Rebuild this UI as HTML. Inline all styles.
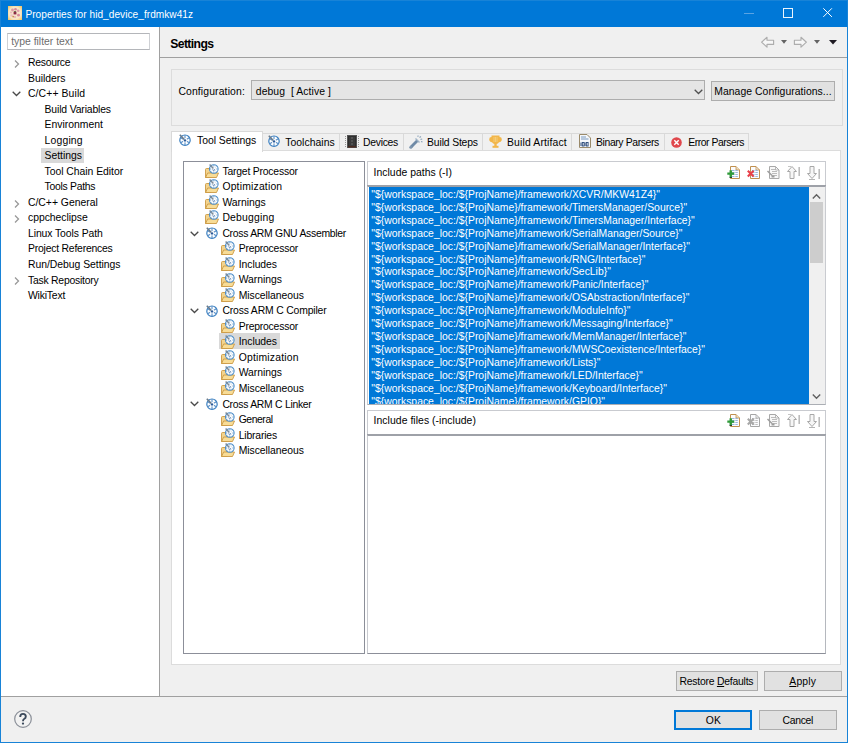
<!DOCTYPE html><html><head><meta charset="utf-8"><style>
html,body{margin:0;padding:0;}
body{width:848px;height:743px;position:relative;overflow:hidden;background:#f0f0f0;font-family:"Liberation Sans",sans-serif;}
.t{position:absolute;white-space:pre;line-height:20px;height:20px;}
.r{position:absolute;box-sizing:border-box;}
svg{position:absolute;overflow:visible;}
</style></head><body>
<div class="r" style="left:0px;top:0px;width:848px;height:743px;background:#f0f0f0;border:1px solid #1883d7;"></div>
<div class="r" style="left:1px;top:1px;width:846px;height:26px;background:#0078d7;"></div>
<svg style="left:8px;top:6px" width="14" height="14"><defs><radialGradient id="tg" cx="50%" cy="50%" r="70%"><stop offset="0" stop-color="#f6e2d0"/><stop offset="0.6" stop-color="#f7e6c6"/><stop offset="1" stop-color="#f2bf55"/></radialGradient></defs><rect x="0" y="0" width="14" height="14" fill="url(#tg)"/><circle cx="4.5" cy="4" r="1.4" fill="#dc98a4"/><circle cx="7.5" cy="3.2" r="1.3" fill="#d98a9a"/><circle cx="10.2" cy="4.8" r="1.3" fill="#e0a0ac"/><circle cx="10.5" cy="9.2" r="1.4" fill="#d68898"/><circle cx="7" cy="11" r="1.1" fill="#e4b0b8"/><circle cx="3.6" cy="9.5" r="1.3" fill="#ecc0c4"/><circle cx="3" cy="6.5" r="1" fill="#e8b8bc"/><circle cx="5.2" cy="10.6" r="0.9" fill="#c89050"/><rect x="5.6" y="5.6" width="2.8" height="2.8" fill="#8b2a45"/><rect x="6" y="5" width="2" height="0.8" fill="#5a6a40"/></svg><div class="t" style="left:25.40px;top:4.80px;font-size:10.1px;color:#fff;font-weight:normal;letter-spacing:0.047px;">Properties for hid_device_frdmkw41z</div>
<div class="r" style="left:744px;top:13px;width:10px;height:1px;background:#5aa3e3;"></div>
<div class="r" style="left:783px;top:8px;width:9.5px;height:9.5px;background:none;border:1px solid rgba(255,255,255,0.92);"></div>
<svg style="left:823px;top:8px" width="9" height="9"><path d="M0.3 0.3 L8.9 8.9 M8.9 0.3 L0.3 8.9" stroke="#fff" stroke-width="1"/></svg>
<div class="r" style="left:1px;top:27px;width:158px;height:669px;background:#fff;"></div>
<div class="r" style="left:159px;top:27px;width:1px;height:670px;background:#a0a0a0;"></div>
<div class="r" style="left:1px;top:696px;width:846px;height:1px;background:#a0a0a0;"></div>
<div class="r" style="left:7px;top:33px;width:143px;height:17px;background:#fff;border:1px solid #cfd1d5;border-top-color:#b4b6ba;border-bottom-color:#b4b6ba;"></div>
<div class="t" style="left:11.20px;top:31.70px;font-size:10.4px;color:#6d6d6d;font-weight:normal;letter-spacing:-0.007px;">type filter text</div>
<svg style="left:14px;top:59.8px" width="6" height="8"><path d="M1 0.5 L4.5 4 L1 7.5" fill="none" stroke="#999999" stroke-width="1.3"/></svg>
<div class="t" style="left:28.00px;top:52.70px;font-size:10.4px;color:#000;font-weight:normal;letter-spacing:-0.271px;">Resource</div>
<div class="t" style="left:28.00px;top:68.70px;font-size:10.4px;color:#000;font-weight:normal;letter-spacing:-0.029px;">Builders</div>
<svg style="left:12.2px;top:91.36px" width="9" height="6"><path d="M0.7 0.7 L4.5 4.5 L8.3 0.7" fill="none" stroke="#4a4a4a" stroke-width="1.3"/></svg>
<div class="t" style="left:28.00px;top:83.70px;font-size:10.4px;color:#000;font-weight:normal;letter-spacing:0.110px;">C/C++ Build</div>
<div class="t" style="left:44.60px;top:99.70px;font-size:10.4px;color:#000;font-weight:normal;letter-spacing:-0.150px;">Build Variables</div>
<div class="t" style="left:44.60px;top:114.70px;font-size:10.4px;color:#000;font-weight:normal;">Environment</div>
<div class="t" style="left:44.60px;top:130.70px;font-size:10.4px;color:#000;font-weight:normal;letter-spacing:0.167px;">Logging</div>
<div class="r" style="left:41px;top:147.7px;width:43px;height:15px;background:#d9d9d9;"></div>
<div class="t" style="left:44.60px;top:145.70px;font-size:10.4px;color:#000;font-weight:normal;letter-spacing:-0.029px;">Settings</div>
<div class="t" style="left:44.60px;top:161.70px;font-size:10.4px;color:#000;font-weight:normal;letter-spacing:-0.037px;">Tool Chain Editor</div>
<div class="t" style="left:44.60px;top:176.70px;font-size:10.4px;color:#000;font-weight:normal;letter-spacing:-0.280px;">Tools Paths</div>
<svg style="left:14px;top:199.57px" width="6" height="8"><path d="M1 0.5 L4.5 4 L1 7.5" fill="none" stroke="#999999" stroke-width="1.3"/></svg>
<div class="t" style="left:28.00px;top:192.70px;font-size:10.4px;color:#000;font-weight:normal;letter-spacing:-0.008px;">C/C++ General</div>
<svg style="left:14px;top:215.09999999999997px" width="6" height="8"><path d="M1 0.5 L4.5 4 L1 7.5" fill="none" stroke="#999999" stroke-width="1.3"/></svg>
<div class="t" style="left:28.00px;top:207.70px;font-size:10.4px;color:#000;font-weight:normal;letter-spacing:-0.036px;">cppcheclipse</div>
<div class="t" style="left:28.00px;top:223.70px;font-size:10.4px;color:#000;font-weight:normal;letter-spacing:-0.087px;">Linux Tools Path</div>
<div class="t" style="left:28.00px;top:238.70px;font-size:10.4px;color:#000;font-weight:normal;letter-spacing:-0.212px;">Project References</div>
<div class="t" style="left:28.00px;top:254.70px;font-size:10.4px;color:#000;font-weight:normal;letter-spacing:-0.029px;">Run/Debug Settings</div>
<svg style="left:14px;top:277.21999999999997px" width="6" height="8"><path d="M1 0.5 L4.5 4 L1 7.5" fill="none" stroke="#999999" stroke-width="1.3"/></svg>
<div class="t" style="left:28.00px;top:270.70px;font-size:10.4px;color:#000;font-weight:normal;letter-spacing:-0.236px;">Task Repository</div>
<div class="t" style="left:28.00px;top:285.70px;font-size:10.4px;color:#000;font-weight:normal;letter-spacing:-0.200px;">WikiText</div>
<div class="t" style="left:170.20px;top:34.07px;font-size:12.2px;color:#000;font-weight:bold;letter-spacing:-0.600px;">Settings</div>
<svg style="left:761px;top:37px" width="14" height="11"><path d="M0.6 5.2 L6 0.3 L6 3.2 L12.6 3.2 L12.6 7.4 L6 7.4 L6 10.2 Z" fill="#f7f7f7" stroke="#adadad" stroke-width="1.15" stroke-linejoin="round"/></svg>
<svg style="left:780.5px;top:40px" width="6" height="4"><path d="M0 0 L6 0 L3 3.8 Z" fill="#646464"/></svg>
<svg style="left:794px;top:37px" width="14" height="11"><path d="M12.4 5.2 L7 0.3 L7 3.2 L0.4 3.2 L0.4 7.4 L7 7.4 L7 10.2 Z" fill="#f7f7f7" stroke="#adadad" stroke-width="1.15" stroke-linejoin="round"/></svg>
<svg style="left:813.5px;top:40px" width="6" height="4"><path d="M0 0 L6 0 L3 3.8 Z" fill="#646464"/></svg>
<svg style="left:828.5px;top:40px" width="8" height="5"><path d="M0 0 L8 0 L4 4.5 Z" fill="#1e1a22"/></svg>
<div class="r" style="left:160px;top:57px;width:687px;height:1px;background:#a0a0a0;"></div>
<div class="r" style="left:171px;top:69px;width:672px;height:57px;background:none;border:1px solid #dcdcdc;"></div>
<div class="t" style="left:178.40px;top:81.70px;font-size:10.4px;color:#000;font-weight:normal;letter-spacing:0.131px;">Configuration:</div>
<div class="r" style="left:251px;top:80px;width:454px;height:20px;background:#e5e5e5;border:1px solid #adadad;"></div>
<div class="t" style="left:255.80px;top:81.70px;font-size:10.4px;color:#000;font-weight:normal;letter-spacing:0.069px;">debug  [ Active ]</div>
<svg style="left:694px;top:88.5px" width="9" height="6"><path d="M0.7 0.7 L4.5 4.5 L8.3 0.7" fill="none" stroke="#505050" stroke-width="1.3"/></svg>
<div class="r" style="left:711px;top:81px;width:124px;height:20px;background:#e1e1e1;border:1px solid #adadad;"></div>
<div class="t" style="left:714.20px;top:81.70px;font-size:10.4px;color:#000;font-weight:normal;letter-spacing:0.057px;">Manage Configurations...</div>
<div class="r" style="left:262px;top:133px;width:487px;height:18px;background:#f0f0f0;border:1px solid #d9d9d9;"></div>
<div class="r" style="left:339px;top:134px;width:1px;height:16px;background:#d9d9d9;"></div>
<div class="r" style="left:403px;top:134px;width:1px;height:16px;background:#d9d9d9;"></div>
<div class="r" style="left:482px;top:134px;width:1px;height:16px;background:#d9d9d9;"></div>
<div class="r" style="left:571px;top:134px;width:1px;height:16px;background:#d9d9d9;"></div>
<div class="r" style="left:664px;top:134px;width:1px;height:16px;background:#d9d9d9;"></div>
<div class="r" style="left:171px;top:150px;width:670px;height:515px;background:#fff;border:1px solid #dcdcdc;"></div>
<div class="r" style="left:171px;top:131px;width:92px;height:21px;background:#fff;border:1px solid #d9d9d9;border-bottom:none;"></div>
<svg style="left:179px;top:134px" width="12" height="12" viewBox="0 0 12 12"><circle cx="6" cy="6.2" r="5.2" fill="#fff" stroke="#3a7fc0" stroke-width="1.2"/><path d="M6 1.2 V11.2 M1.7 3.7 L10.3 8.7 M1.7 8.7 L10.3 3.7" stroke="#5a90c8" stroke-width="1.1"/><circle cx="6" cy="6.2" r="2.2" fill="#fff"/><circle cx="6" cy="6.4" r="1.2" fill="#2a5a9a"/><path d="M0.8 0.8 L5.3 5.5" stroke="#6a7a8a" stroke-width="1.6"/></svg>
<div class="t" style="left:197.00px;top:130.70px;font-size:10.4px;color:#000;font-weight:normal;letter-spacing:-0.033px;">Tool Settings</div>
<svg style="left:267.5px;top:135px" width="12" height="12" viewBox="0 0 12 12"><circle cx="6" cy="6.2" r="5.2" fill="#fff" stroke="#3a7fc0" stroke-width="1.2"/><path d="M6 1.2 V11.2 M1.7 3.7 L10.3 8.7 M1.7 8.7 L10.3 3.7" stroke="#5a90c8" stroke-width="1.1"/><circle cx="6" cy="6.2" r="2.2" fill="#fff"/><circle cx="6" cy="6.4" r="1.2" fill="#2a5a9a"/><path d="M0.8 0.8 L5.3 5.5" stroke="#6a7a8a" stroke-width="1.6"/></svg>
<div class="t" style="left:285.20px;top:132.70px;font-size:10.4px;color:#000;font-weight:normal;letter-spacing:0.044px;">Toolchains</div>
<svg style="left:345px;top:135px" width="14" height="13"><rect x="2.5" y="0.5" width="9" height="12" fill="#2e2e2e" stroke="#555" stroke-width="1"/><rect x="4" y="2" width="6" height="9" fill="#3a3a3a"/><path d="M6 3 H8 M6 6 H8 M6 9 H8" stroke="#777" stroke-width="0.8"/><path d="M0.5 1 V12" stroke="#9a9a9a" stroke-width="1" stroke-dasharray="1 1"/><path d="M13.5 1 V12" stroke="#9a9a9a" stroke-width="1" stroke-dasharray="1 1"/><rect x="3" y="11" width="8" height="1.5" fill="#4a2a20"/></svg>
<div class="t" style="left:363.10px;top:132.70px;font-size:10.4px;color:#000;font-weight:normal;letter-spacing:-0.300px;">Devices</div>
<svg style="left:409px;top:135px" width="14" height="13"><path d="M0.8 11.2 L7.5 4.5 L9.5 6.5 L2.8 13.2 Z" fill="#6f8aa6"/><circle cx="1.8" cy="12.2" r="1.5" fill="#7d95ad"/><path d="M6.5 3.5 L10.5 7.5" stroke="#9fb3c6" stroke-width="1.5"/><path d="M8.5 1.5 L9.5 0.8 M10.5 2.5 L12 1.5 M11.5 4.5 L13.2 4 M12 6.5 L13.5 7" stroke="#8aa2b8" stroke-width="1.1"/></svg>
<div class="t" style="left:427.10px;top:132.70px;font-size:10.4px;color:#000;font-weight:normal;letter-spacing:-0.160px;">Build Steps</div>
<svg style="left:489px;top:135px" width="13" height="13"><path d="M2.5 0.5 H10.5 V2 Q12.8 2 12.8 4.2 Q12.8 6.8 10 7.2 Q9 9 7.5 9 H5.5 Q4 9 3 7.2 Q0.2 6.8 0.2 4.2 Q0.2 2 2.5 2 Z" fill="#f2b64a"/><path d="M5 2 V7 M6.5 2 V7 M8 2 V7" stroke="#f7d58e" stroke-width="0.7"/><rect x="5.3" y="9" width="2.4" height="2" fill="#f2b64a"/><rect x="3.5" y="10.8" width="6" height="2" fill="#f2b64a"/></svg><div class="t" style="left:507.00px;top:132.70px;font-size:10.4px;color:#000;font-weight:normal;letter-spacing:0.154px;">Build Artifact</div>
<svg style="left:579px;top:134px" width="12" height="14"><path d="M0.5 0.5 H8 L11.5 4 V13.5 H0.5 Z" fill="#f4f7fb" stroke="#9a8a6a" stroke-width="1"/><path d="M2 3 H7 M2 5 H9.5" stroke="#7a9ac0" stroke-width="1"/><path d="M2 8.5 V12 M6 8.5 V12" stroke="#2a4a7a" stroke-width="1"/><rect x="3.3" y="8.5" width="1.8" height="3.5" fill="none" stroke="#2a4a7a" stroke-width="0.9"/><rect x="7.3" y="8.5" width="1.8" height="3.5" fill="none" stroke="#2a4a7a" stroke-width="0.9"/></svg><div class="t" style="left:596.00px;top:132.70px;font-size:10.4px;color:#000;font-weight:normal;letter-spacing:-0.377px;">Binary Parsers</div>
<svg style="left:671px;top:137px" width="11" height="11"><circle cx="5.5" cy="5.5" r="5.3" fill="#e0474c"/><path d="M3.3 3.3 L7.7 7.7 M7.7 3.3 L3.3 7.7" stroke="#fff" stroke-width="1.4"/></svg>
<div class="t" style="left:688.20px;top:132.70px;font-size:10.4px;color:#000;font-weight:normal;letter-spacing:-0.458px;">Error Parsers</div>
<div class="r" style="left:183px;top:161px;width:182px;height:493px;background:#fff;border:1px solid #8c8f99;"></div>
<svg style="left:205px;top:163.8px" width="14" height="14" viewBox="0 0 14 14"><path d="M0.5 13.5 V5.5 Q0.5 4.5 1.5 4.5 H4 L5 5.5 H6 V13.5 Z" fill="#f3d48e" stroke="#cc9a44" stroke-width="0.9"/><path d="M0.6 13.5 L2.6 9 H13.5 L11.5 13.5 Z" fill="#f8dc96" stroke="#cc9a44" stroke-width="0.9"/><circle cx="8.8" cy="5" r="4.3" fill="#fff" stroke="#4a8cc8" stroke-width="1.1"/><path d="M8.8 1.2 V2.5 M8.8 7.5 V8.8 M5 5 H6.3 M11.3 5 H12.6 M6.3 2.5 L7.1 3.3 M10.5 6.7 L11.3 7.5 M11.3 2.5 L10.5 3.3 M7.1 6.7 L6.3 7.5" stroke="#6a9ccc" stroke-width="0.9"/><path d="M7.5 5.3 L8.8 6.5 L10.1 5.3" fill="none" stroke="#2f5f9a" stroke-width="0.9"/><path d="M4.6 0.5 L8.4 4.6" stroke="#7d8b99" stroke-width="1.5"/></svg>
<div class="t" style="left:222.40px;top:161.70px;font-size:10.4px;color:#000;font-weight:normal;letter-spacing:-0.200px;">Target Processor</div>
<svg style="left:205px;top:179.33px" width="14" height="14" viewBox="0 0 14 14"><path d="M0.5 13.5 V5.5 Q0.5 4.5 1.5 4.5 H4 L5 5.5 H6 V13.5 Z" fill="#f3d48e" stroke="#cc9a44" stroke-width="0.9"/><path d="M0.6 13.5 L2.6 9 H13.5 L11.5 13.5 Z" fill="#f8dc96" stroke="#cc9a44" stroke-width="0.9"/><circle cx="8.8" cy="5" r="4.3" fill="#fff" stroke="#4a8cc8" stroke-width="1.1"/><path d="M8.8 1.2 V2.5 M8.8 7.5 V8.8 M5 5 H6.3 M11.3 5 H12.6 M6.3 2.5 L7.1 3.3 M10.5 6.7 L11.3 7.5 M11.3 2.5 L10.5 3.3 M7.1 6.7 L6.3 7.5" stroke="#6a9ccc" stroke-width="0.9"/><path d="M7.5 5.3 L8.8 6.5 L10.1 5.3" fill="none" stroke="#2f5f9a" stroke-width="0.9"/><path d="M4.6 0.5 L8.4 4.6" stroke="#7d8b99" stroke-width="1.5"/></svg>
<div class="t" style="left:222.40px;top:176.70px;font-size:10.4px;color:#000;font-weight:normal;letter-spacing:0.182px;">Optimization</div>
<svg style="left:205px;top:194.86px" width="14" height="14" viewBox="0 0 14 14"><path d="M0.5 13.5 V5.5 Q0.5 4.5 1.5 4.5 H4 L5 5.5 H6 V13.5 Z" fill="#f3d48e" stroke="#cc9a44" stroke-width="0.9"/><path d="M0.6 13.5 L2.6 9 H13.5 L11.5 13.5 Z" fill="#f8dc96" stroke="#cc9a44" stroke-width="0.9"/><circle cx="8.8" cy="5" r="4.3" fill="#fff" stroke="#4a8cc8" stroke-width="1.1"/><path d="M8.8 1.2 V2.5 M8.8 7.5 V8.8 M5 5 H6.3 M11.3 5 H12.6 M6.3 2.5 L7.1 3.3 M10.5 6.7 L11.3 7.5 M11.3 2.5 L10.5 3.3 M7.1 6.7 L6.3 7.5" stroke="#6a9ccc" stroke-width="0.9"/><path d="M7.5 5.3 L8.8 6.5 L10.1 5.3" fill="none" stroke="#2f5f9a" stroke-width="0.9"/><path d="M4.6 0.5 L8.4 4.6" stroke="#7d8b99" stroke-width="1.5"/></svg>
<div class="t" style="left:222.40px;top:192.70px;font-size:10.4px;color:#000;font-weight:normal;letter-spacing:-0.043px;">Warnings</div>
<svg style="left:205px;top:210.39000000000001px" width="14" height="14" viewBox="0 0 14 14"><path d="M0.5 13.5 V5.5 Q0.5 4.5 1.5 4.5 H4 L5 5.5 H6 V13.5 Z" fill="#f3d48e" stroke="#cc9a44" stroke-width="0.9"/><path d="M0.6 13.5 L2.6 9 H13.5 L11.5 13.5 Z" fill="#f8dc96" stroke="#cc9a44" stroke-width="0.9"/><circle cx="8.8" cy="5" r="4.3" fill="#fff" stroke="#4a8cc8" stroke-width="1.1"/><path d="M8.8 1.2 V2.5 M8.8 7.5 V8.8 M5 5 H6.3 M11.3 5 H12.6 M6.3 2.5 L7.1 3.3 M10.5 6.7 L11.3 7.5 M11.3 2.5 L10.5 3.3 M7.1 6.7 L6.3 7.5" stroke="#6a9ccc" stroke-width="0.9"/><path d="M7.5 5.3 L8.8 6.5 L10.1 5.3" fill="none" stroke="#2f5f9a" stroke-width="0.9"/><path d="M4.6 0.5 L8.4 4.6" stroke="#7d8b99" stroke-width="1.5"/></svg>
<div class="t" style="left:222.40px;top:207.70px;font-size:10.4px;color:#000;font-weight:normal;letter-spacing:0.213px;">Debugging</div>
<svg style="left:190px;top:230.62px" width="9" height="6"><path d="M0.7 0.7 L4.5 4.5 L8.3 0.7" fill="none" stroke="#4a4a4a" stroke-width="1.3"/></svg>
<svg style="left:205.5px;top:226.92000000000002px" width="12" height="12" viewBox="0 0 12 12"><circle cx="6" cy="6.2" r="5.2" fill="#fff" stroke="#3a7fc0" stroke-width="1.2"/><path d="M6 1.2 V11.2 M1.7 3.7 L10.3 8.7 M1.7 8.7 L10.3 3.7" stroke="#5a90c8" stroke-width="1.1"/><circle cx="6" cy="6.2" r="2.2" fill="#fff"/><circle cx="6" cy="6.4" r="1.2" fill="#2a5a9a"/><path d="M0.8 0.8 L5.3 5.5" stroke="#6a7a8a" stroke-width="1.6"/></svg>
<div class="t" style="left:222.40px;top:223.70px;font-size:10.4px;color:#000;font-weight:normal;letter-spacing:-0.273px;">Cross ARM GNU Assembler</div>
<svg style="left:221px;top:241.45px" width="14" height="14" viewBox="0 0 14 14"><path d="M0.5 13.5 V5.5 Q0.5 4.5 1.5 4.5 H4 L5 5.5 H6 V13.5 Z" fill="#f3d48e" stroke="#cc9a44" stroke-width="0.9"/><path d="M0.6 13.5 L2.6 9 H13.5 L11.5 13.5 Z" fill="#f8dc96" stroke="#cc9a44" stroke-width="0.9"/><circle cx="8.8" cy="5" r="4.3" fill="#fff" stroke="#4a8cc8" stroke-width="1.1"/><path d="M8.8 1.2 V2.5 M8.8 7.5 V8.8 M5 5 H6.3 M11.3 5 H12.6 M6.3 2.5 L7.1 3.3 M10.5 6.7 L11.3 7.5 M11.3 2.5 L10.5 3.3 M7.1 6.7 L6.3 7.5" stroke="#6a9ccc" stroke-width="0.9"/><path d="M7.5 5.3 L8.8 6.5 L10.1 5.3" fill="none" stroke="#2f5f9a" stroke-width="0.9"/><path d="M4.6 0.5 L8.4 4.6" stroke="#7d8b99" stroke-width="1.5"/></svg>
<div class="t" style="left:238.70px;top:238.70px;font-size:10.4px;color:#000;font-weight:normal;letter-spacing:-0.209px;">Preprocessor</div>
<svg style="left:221px;top:256.98px" width="14" height="14" viewBox="0 0 14 14"><path d="M0.5 13.5 V5.5 Q0.5 4.5 1.5 4.5 H4 L5 5.5 H6 V13.5 Z" fill="#f3d48e" stroke="#cc9a44" stroke-width="0.9"/><path d="M0.6 13.5 L2.6 9 H13.5 L11.5 13.5 Z" fill="#f8dc96" stroke="#cc9a44" stroke-width="0.9"/><circle cx="8.8" cy="5" r="4.3" fill="#fff" stroke="#4a8cc8" stroke-width="1.1"/><path d="M8.8 1.2 V2.5 M8.8 7.5 V8.8 M5 5 H6.3 M11.3 5 H12.6 M6.3 2.5 L7.1 3.3 M10.5 6.7 L11.3 7.5 M11.3 2.5 L10.5 3.3 M7.1 6.7 L6.3 7.5" stroke="#6a9ccc" stroke-width="0.9"/><path d="M7.5 5.3 L8.8 6.5 L10.1 5.3" fill="none" stroke="#2f5f9a" stroke-width="0.9"/><path d="M4.6 0.5 L8.4 4.6" stroke="#7d8b99" stroke-width="1.5"/></svg>
<div class="t" style="left:238.70px;top:254.70px;font-size:10.4px;color:#000;font-weight:normal;letter-spacing:-0.057px;">Includes</div>
<svg style="left:221px;top:272.51px" width="14" height="14" viewBox="0 0 14 14"><path d="M0.5 13.5 V5.5 Q0.5 4.5 1.5 4.5 H4 L5 5.5 H6 V13.5 Z" fill="#f3d48e" stroke="#cc9a44" stroke-width="0.9"/><path d="M0.6 13.5 L2.6 9 H13.5 L11.5 13.5 Z" fill="#f8dc96" stroke="#cc9a44" stroke-width="0.9"/><circle cx="8.8" cy="5" r="4.3" fill="#fff" stroke="#4a8cc8" stroke-width="1.1"/><path d="M8.8 1.2 V2.5 M8.8 7.5 V8.8 M5 5 H6.3 M11.3 5 H12.6 M6.3 2.5 L7.1 3.3 M10.5 6.7 L11.3 7.5 M11.3 2.5 L10.5 3.3 M7.1 6.7 L6.3 7.5" stroke="#6a9ccc" stroke-width="0.9"/><path d="M7.5 5.3 L8.8 6.5 L10.1 5.3" fill="none" stroke="#2f5f9a" stroke-width="0.9"/><path d="M4.6 0.5 L8.4 4.6" stroke="#7d8b99" stroke-width="1.5"/></svg>
<div class="t" style="left:238.70px;top:269.70px;font-size:10.4px;color:#000;font-weight:normal;letter-spacing:-0.043px;">Warnings</div>
<svg style="left:221px;top:288.04px" width="14" height="14" viewBox="0 0 14 14"><path d="M0.5 13.5 V5.5 Q0.5 4.5 1.5 4.5 H4 L5 5.5 H6 V13.5 Z" fill="#f3d48e" stroke="#cc9a44" stroke-width="0.9"/><path d="M0.6 13.5 L2.6 9 H13.5 L11.5 13.5 Z" fill="#f8dc96" stroke="#cc9a44" stroke-width="0.9"/><circle cx="8.8" cy="5" r="4.3" fill="#fff" stroke="#4a8cc8" stroke-width="1.1"/><path d="M8.8 1.2 V2.5 M8.8 7.5 V8.8 M5 5 H6.3 M11.3 5 H12.6 M6.3 2.5 L7.1 3.3 M10.5 6.7 L11.3 7.5 M11.3 2.5 L10.5 3.3 M7.1 6.7 L6.3 7.5" stroke="#6a9ccc" stroke-width="0.9"/><path d="M7.5 5.3 L8.8 6.5 L10.1 5.3" fill="none" stroke="#2f5f9a" stroke-width="0.9"/><path d="M4.6 0.5 L8.4 4.6" stroke="#7d8b99" stroke-width="1.5"/></svg>
<div class="t" style="left:238.70px;top:285.70px;font-size:10.4px;color:#000;font-weight:normal;letter-spacing:-0.058px;">Miscellaneous</div>
<svg style="left:190px;top:308.27px" width="9" height="6"><path d="M0.7 0.7 L4.5 4.5 L8.3 0.7" fill="none" stroke="#4a4a4a" stroke-width="1.3"/></svg>
<svg style="left:205.5px;top:304.57px" width="12" height="12" viewBox="0 0 12 12"><circle cx="6" cy="6.2" r="5.2" fill="#fff" stroke="#3a7fc0" stroke-width="1.2"/><path d="M6 1.2 V11.2 M1.7 3.7 L10.3 8.7 M1.7 8.7 L10.3 3.7" stroke="#5a90c8" stroke-width="1.1"/><circle cx="6" cy="6.2" r="2.2" fill="#fff"/><circle cx="6" cy="6.4" r="1.2" fill="#2a5a9a"/><path d="M0.8 0.8 L5.3 5.5" stroke="#6a7a8a" stroke-width="1.6"/></svg>
<div class="t" style="left:222.40px;top:300.70px;font-size:10.4px;color:#000;font-weight:normal;letter-spacing:-0.163px;">Cross ARM C Compiler</div>
<svg style="left:221px;top:319.1px" width="14" height="14" viewBox="0 0 14 14"><path d="M0.5 13.5 V5.5 Q0.5 4.5 1.5 4.5 H4 L5 5.5 H6 V13.5 Z" fill="#f3d48e" stroke="#cc9a44" stroke-width="0.9"/><path d="M0.6 13.5 L2.6 9 H13.5 L11.5 13.5 Z" fill="#f8dc96" stroke="#cc9a44" stroke-width="0.9"/><circle cx="8.8" cy="5" r="4.3" fill="#fff" stroke="#4a8cc8" stroke-width="1.1"/><path d="M8.8 1.2 V2.5 M8.8 7.5 V8.8 M5 5 H6.3 M11.3 5 H12.6 M6.3 2.5 L7.1 3.3 M10.5 6.7 L11.3 7.5 M11.3 2.5 L10.5 3.3 M7.1 6.7 L6.3 7.5" stroke="#6a9ccc" stroke-width="0.9"/><path d="M7.5 5.3 L8.8 6.5 L10.1 5.3" fill="none" stroke="#2f5f9a" stroke-width="0.9"/><path d="M4.6 0.5 L8.4 4.6" stroke="#7d8b99" stroke-width="1.5"/></svg>
<div class="t" style="left:238.70px;top:316.70px;font-size:10.4px;color:#000;font-weight:normal;letter-spacing:-0.209px;">Preprocessor</div>
<div class="r" style="left:219px;top:333.3px;width:61px;height:15.5px;background:#d9d9d9;"></div>
<svg style="left:221px;top:334.63px" width="14" height="14" viewBox="0 0 14 14"><path d="M0.5 13.5 V5.5 Q0.5 4.5 1.5 4.5 H4 L5 5.5 H6 V13.5 Z" fill="#f3d48e" stroke="#cc9a44" stroke-width="0.9"/><path d="M0.6 13.5 L2.6 9 H13.5 L11.5 13.5 Z" fill="#f8dc96" stroke="#cc9a44" stroke-width="0.9"/><circle cx="8.8" cy="5" r="4.3" fill="#fff" stroke="#4a8cc8" stroke-width="1.1"/><path d="M8.8 1.2 V2.5 M8.8 7.5 V8.8 M5 5 H6.3 M11.3 5 H12.6 M6.3 2.5 L7.1 3.3 M10.5 6.7 L11.3 7.5 M11.3 2.5 L10.5 3.3 M7.1 6.7 L6.3 7.5" stroke="#6a9ccc" stroke-width="0.9"/><path d="M7.5 5.3 L8.8 6.5 L10.1 5.3" fill="none" stroke="#2f5f9a" stroke-width="0.9"/><path d="M4.6 0.5 L8.4 4.6" stroke="#7d8b99" stroke-width="1.5"/></svg>
<div class="t" style="left:238.70px;top:331.70px;font-size:10.4px;color:#000;font-weight:normal;letter-spacing:-0.057px;">Includes</div>
<svg style="left:221px;top:350.15999999999997px" width="14" height="14" viewBox="0 0 14 14"><path d="M0.5 13.5 V5.5 Q0.5 4.5 1.5 4.5 H4 L5 5.5 H6 V13.5 Z" fill="#f3d48e" stroke="#cc9a44" stroke-width="0.9"/><path d="M0.6 13.5 L2.6 9 H13.5 L11.5 13.5 Z" fill="#f8dc96" stroke="#cc9a44" stroke-width="0.9"/><circle cx="8.8" cy="5" r="4.3" fill="#fff" stroke="#4a8cc8" stroke-width="1.1"/><path d="M8.8 1.2 V2.5 M8.8 7.5 V8.8 M5 5 H6.3 M11.3 5 H12.6 M6.3 2.5 L7.1 3.3 M10.5 6.7 L11.3 7.5 M11.3 2.5 L10.5 3.3 M7.1 6.7 L6.3 7.5" stroke="#6a9ccc" stroke-width="0.9"/><path d="M7.5 5.3 L8.8 6.5 L10.1 5.3" fill="none" stroke="#2f5f9a" stroke-width="0.9"/><path d="M4.6 0.5 L8.4 4.6" stroke="#7d8b99" stroke-width="1.5"/></svg>
<div class="t" style="left:238.70px;top:347.70px;font-size:10.4px;color:#000;font-weight:normal;letter-spacing:0.182px;">Optimization</div>
<svg style="left:221px;top:365.69px" width="14" height="14" viewBox="0 0 14 14"><path d="M0.5 13.5 V5.5 Q0.5 4.5 1.5 4.5 H4 L5 5.5 H6 V13.5 Z" fill="#f3d48e" stroke="#cc9a44" stroke-width="0.9"/><path d="M0.6 13.5 L2.6 9 H13.5 L11.5 13.5 Z" fill="#f8dc96" stroke="#cc9a44" stroke-width="0.9"/><circle cx="8.8" cy="5" r="4.3" fill="#fff" stroke="#4a8cc8" stroke-width="1.1"/><path d="M8.8 1.2 V2.5 M8.8 7.5 V8.8 M5 5 H6.3 M11.3 5 H12.6 M6.3 2.5 L7.1 3.3 M10.5 6.7 L11.3 7.5 M11.3 2.5 L10.5 3.3 M7.1 6.7 L6.3 7.5" stroke="#6a9ccc" stroke-width="0.9"/><path d="M7.5 5.3 L8.8 6.5 L10.1 5.3" fill="none" stroke="#2f5f9a" stroke-width="0.9"/><path d="M4.6 0.5 L8.4 4.6" stroke="#7d8b99" stroke-width="1.5"/></svg>
<div class="t" style="left:238.70px;top:362.70px;font-size:10.4px;color:#000;font-weight:normal;letter-spacing:-0.043px;">Warnings</div>
<svg style="left:221px;top:381.22px" width="14" height="14" viewBox="0 0 14 14"><path d="M0.5 13.5 V5.5 Q0.5 4.5 1.5 4.5 H4 L5 5.5 H6 V13.5 Z" fill="#f3d48e" stroke="#cc9a44" stroke-width="0.9"/><path d="M0.6 13.5 L2.6 9 H13.5 L11.5 13.5 Z" fill="#f8dc96" stroke="#cc9a44" stroke-width="0.9"/><circle cx="8.8" cy="5" r="4.3" fill="#fff" stroke="#4a8cc8" stroke-width="1.1"/><path d="M8.8 1.2 V2.5 M8.8 7.5 V8.8 M5 5 H6.3 M11.3 5 H12.6 M6.3 2.5 L7.1 3.3 M10.5 6.7 L11.3 7.5 M11.3 2.5 L10.5 3.3 M7.1 6.7 L6.3 7.5" stroke="#6a9ccc" stroke-width="0.9"/><path d="M7.5 5.3 L8.8 6.5 L10.1 5.3" fill="none" stroke="#2f5f9a" stroke-width="0.9"/><path d="M4.6 0.5 L8.4 4.6" stroke="#7d8b99" stroke-width="1.5"/></svg>
<div class="t" style="left:238.70px;top:378.70px;font-size:10.4px;color:#000;font-weight:normal;letter-spacing:-0.058px;">Miscellaneous</div>
<svg style="left:190px;top:401.45px" width="9" height="6"><path d="M0.7 0.7 L4.5 4.5 L8.3 0.7" fill="none" stroke="#4a4a4a" stroke-width="1.3"/></svg>
<svg style="left:205.5px;top:397.75px" width="12" height="12" viewBox="0 0 12 12"><circle cx="6" cy="6.2" r="5.2" fill="#fff" stroke="#3a7fc0" stroke-width="1.2"/><path d="M6 1.2 V11.2 M1.7 3.7 L10.3 8.7 M1.7 8.7 L10.3 3.7" stroke="#5a90c8" stroke-width="1.1"/><circle cx="6" cy="6.2" r="2.2" fill="#fff"/><circle cx="6" cy="6.4" r="1.2" fill="#2a5a9a"/><path d="M0.8 0.8 L5.3 5.5" stroke="#6a7a8a" stroke-width="1.6"/></svg>
<div class="t" style="left:222.40px;top:394.70px;font-size:10.4px;color:#000;font-weight:normal;letter-spacing:-0.276px;">Cross ARM C Linker</div>
<svg style="left:221px;top:412.28px" width="14" height="14" viewBox="0 0 14 14"><path d="M0.5 13.5 V5.5 Q0.5 4.5 1.5 4.5 H4 L5 5.5 H6 V13.5 Z" fill="#f3d48e" stroke="#cc9a44" stroke-width="0.9"/><path d="M0.6 13.5 L2.6 9 H13.5 L11.5 13.5 Z" fill="#f8dc96" stroke="#cc9a44" stroke-width="0.9"/><circle cx="8.8" cy="5" r="4.3" fill="#fff" stroke="#4a8cc8" stroke-width="1.1"/><path d="M8.8 1.2 V2.5 M8.8 7.5 V8.8 M5 5 H6.3 M11.3 5 H12.6 M6.3 2.5 L7.1 3.3 M10.5 6.7 L11.3 7.5 M11.3 2.5 L10.5 3.3 M7.1 6.7 L6.3 7.5" stroke="#6a9ccc" stroke-width="0.9"/><path d="M7.5 5.3 L8.8 6.5 L10.1 5.3" fill="none" stroke="#2f5f9a" stroke-width="0.9"/><path d="M4.6 0.5 L8.4 4.6" stroke="#7d8b99" stroke-width="1.5"/></svg>
<div class="t" style="left:238.70px;top:409.70px;font-size:10.4px;color:#000;font-weight:normal;letter-spacing:-0.433px;">General</div>
<svg style="left:221px;top:427.81px" width="14" height="14" viewBox="0 0 14 14"><path d="M0.5 13.5 V5.5 Q0.5 4.5 1.5 4.5 H4 L5 5.5 H6 V13.5 Z" fill="#f3d48e" stroke="#cc9a44" stroke-width="0.9"/><path d="M0.6 13.5 L2.6 9 H13.5 L11.5 13.5 Z" fill="#f8dc96" stroke="#cc9a44" stroke-width="0.9"/><circle cx="8.8" cy="5" r="4.3" fill="#fff" stroke="#4a8cc8" stroke-width="1.1"/><path d="M8.8 1.2 V2.5 M8.8 7.5 V8.8 M5 5 H6.3 M11.3 5 H12.6 M6.3 2.5 L7.1 3.3 M10.5 6.7 L11.3 7.5 M11.3 2.5 L10.5 3.3 M7.1 6.7 L6.3 7.5" stroke="#6a9ccc" stroke-width="0.9"/><path d="M7.5 5.3 L8.8 6.5 L10.1 5.3" fill="none" stroke="#2f5f9a" stroke-width="0.9"/><path d="M4.6 0.5 L8.4 4.6" stroke="#7d8b99" stroke-width="1.5"/></svg>
<div class="t" style="left:238.70px;top:425.70px;font-size:10.4px;color:#000;font-weight:normal;letter-spacing:-0.175px;">Libraries</div>
<svg style="left:221px;top:443.34px" width="14" height="14" viewBox="0 0 14 14"><path d="M0.5 13.5 V5.5 Q0.5 4.5 1.5 4.5 H4 L5 5.5 H6 V13.5 Z" fill="#f3d48e" stroke="#cc9a44" stroke-width="0.9"/><path d="M0.6 13.5 L2.6 9 H13.5 L11.5 13.5 Z" fill="#f8dc96" stroke="#cc9a44" stroke-width="0.9"/><circle cx="8.8" cy="5" r="4.3" fill="#fff" stroke="#4a8cc8" stroke-width="1.1"/><path d="M8.8 1.2 V2.5 M8.8 7.5 V8.8 M5 5 H6.3 M11.3 5 H12.6 M6.3 2.5 L7.1 3.3 M10.5 6.7 L11.3 7.5 M11.3 2.5 L10.5 3.3 M7.1 6.7 L6.3 7.5" stroke="#6a9ccc" stroke-width="0.9"/><path d="M7.5 5.3 L8.8 6.5 L10.1 5.3" fill="none" stroke="#2f5f9a" stroke-width="0.9"/><path d="M4.6 0.5 L8.4 4.6" stroke="#7d8b99" stroke-width="1.5"/></svg>
<div class="t" style="left:238.70px;top:440.70px;font-size:10.4px;color:#000;font-weight:normal;letter-spacing:-0.058px;">Miscellaneous</div>
<div class="r" style="left:367px;top:161px;width:459px;height:25px;background:#fff;border:1px solid #c9cbd0;"></div>
<div class="r" style="left:367px;top:185px;width:459px;height:1px;background:#9ea1a8;"></div>
<div class="t" style="left:373.60px;top:162.70px;font-size:10.4px;color:#000;font-weight:normal;letter-spacing:0.024px;">Include paths (-I)</div>
<svg style="left:727px;top:165.5px" width="14" height="14"><path d="M3.5 0.5 H9 L12.5 4 V12.5 H3.5 Z" fill="#fbfcfe" stroke="#c09050" stroke-width="1"/><path d="M9 0.5 V4 H12.5" fill="#f0e0c0" stroke="#c09050" stroke-width="0.8"/><path d="M5 4.5 H11 M5 6.5 H11 M5 8.5 H11 M5 10.5 H11" stroke="#8fb0d8" stroke-width="0.9" stroke-dasharray="2.5 0.8"/><path d="M0.3 7.6 H7.2 M3.75 4.2 V11" stroke="#2f9a3a" stroke-width="2.4"/><path d="M2.5 11.5 H5" stroke="#2a3a30" stroke-width="1"/></svg><svg style="left:747px;top:165.5px" width="14" height="14"><path d="M3.5 0.5 H9 L12.5 4 V12.5 H3.5 Z" fill="#fbfcfe" stroke="#c09050" stroke-width="1"/><path d="M9 0.5 V4 H12.5" fill="none" stroke="#c09050" stroke-width="0.8"/><path d="M5 4.5 H11 M5 6.5 H11 M5 8.5 H11 M5 10.5 H11" stroke="#8fb0d8" stroke-width="0.9" stroke-dasharray="2.5 0.8"/><path d="M0.8 4.8 L6.6 10.6 M6.6 4.8 L0.8 10.6" stroke="#e8404a" stroke-width="2.1"/></svg><svg style="left:767px;top:165.5px" width="14" height="14"><path d="M2.5 0.5 H8.5 L12 4 V12.5 H2.5 Z" fill="#f8f8f8" stroke="#a8a8a8" stroke-width="1"/><path d="M8.5 0.5 V4 H12" fill="none" stroke="#a8a8a8" stroke-width="0.8"/><path d="M4 3.5 H9 M5 5.5 H10 M5 7.5 H10 M5 9.5 H10" stroke="#b4b4b4" stroke-width="0.9"/><path d="M0.5 5 L5 9.5" stroke="#9c9c9c" stroke-width="1.4"/><rect x="4.5" y="9.5" width="3" height="2" fill="#9c9c9c"/></svg><svg style="left:787px;top:165.5px" width="14" height="14"><path d="M5 0.5 L9.5 5.5 H7 V12.5 H3 V5.5 H0.5 Z" fill="#f6f6f6" stroke="#a8a8a8" stroke-width="1"/><path d="M12.2 1 V10" stroke="#bcbcbc" stroke-width="1.6"/><path d="M1 0.5 H4" stroke="#c4c4c4"/></svg><svg style="left:807px;top:165.5px" width="14" height="14"><path d="M5 12.5 L9.5 7.5 H7 V0.5 H3 V7.5 H0.5 Z" fill="#f6f6f6" stroke="#a8a8a8" stroke-width="1"/><path d="M12.2 3 V13" stroke="#bcbcbc" stroke-width="1.6"/><path d="M2 13.5 H8" stroke="#b4b4b4"/></svg><div class="r" style="left:367px;top:186px;width:459px;height:219px;background:#fff;border:1px solid #c9cbd0;border-top-color:#9ea1a8;border-bottom-color:#abaeb4;"></div>
<div class="r" style="left:369px;top:187px;width:440px;height:217px;background:#0078d7;"></div>
<div style="position:absolute;left:368px;top:187px;width:441px;height:217px;overflow:hidden">
<div class="t" style="left:3.30px;top:-2.30px;font-size:10.4px;color:#fff;font-weight:normal;">"${workspace_loc:/${ProjName}/framework/XCVR/MKW41Z4}"</div>
<div class="t" style="left:3.30px;top:10.70px;font-size:10.4px;color:#fff;font-weight:normal;">"${workspace_loc:/${ProjName}/framework/TimersManager/Source}"</div>
<div class="t" style="left:3.30px;top:23.70px;font-size:10.4px;color:#fff;font-weight:normal;">"${workspace_loc:/${ProjName}/framework/TimersManager/Interface}"</div>
<div class="t" style="left:3.30px;top:36.70px;font-size:10.4px;color:#fff;font-weight:normal;">"${workspace_loc:/${ProjName}/framework/SerialManager/Source}"</div>
<div class="t" style="left:3.30px;top:49.70px;font-size:10.4px;color:#fff;font-weight:normal;">"${workspace_loc:/${ProjName}/framework/SerialManager/Interface}"</div>
<div class="t" style="left:3.30px;top:62.70px;font-size:10.4px;color:#fff;font-weight:normal;">"${workspace_loc:/${ProjName}/framework/RNG/Interface}"</div>
<div class="t" style="left:3.30px;top:74.70px;font-size:10.4px;color:#fff;font-weight:normal;">"${workspace_loc:/${ProjName}/framework/SecLib}"</div>
<div class="t" style="left:3.30px;top:87.70px;font-size:10.4px;color:#fff;font-weight:normal;">"${workspace_loc:/${ProjName}/framework/Panic/Interface}"</div>
<div class="t" style="left:3.30px;top:100.70px;font-size:10.4px;color:#fff;font-weight:normal;">"${workspace_loc:/${ProjName}/framework/OSAbstraction/Interface}"</div>
<div class="t" style="left:3.30px;top:113.70px;font-size:10.4px;color:#fff;font-weight:normal;">"${workspace_loc:/${ProjName}/framework/ModuleInfo}"</div>
<div class="t" style="left:3.30px;top:126.70px;font-size:10.4px;color:#fff;font-weight:normal;">"${workspace_loc:/${ProjName}/framework/Messaging/Interface}"</div>
<div class="t" style="left:3.30px;top:139.70px;font-size:10.4px;color:#fff;font-weight:normal;">"${workspace_loc:/${ProjName}/framework/MemManager/Interface}"</div>
<div class="t" style="left:3.30px;top:152.70px;font-size:10.4px;color:#fff;font-weight:normal;">"${workspace_loc:/${ProjName}/framework/MWSCoexistence/Interface}"</div>
<div class="t" style="left:3.30px;top:165.70px;font-size:10.4px;color:#fff;font-weight:normal;">"${workspace_loc:/${ProjName}/framework/Lists}"</div>
<div class="t" style="left:3.30px;top:178.70px;font-size:10.4px;color:#fff;font-weight:normal;">"${workspace_loc:/${ProjName}/framework/LED/Interface}"</div>
<div class="t" style="left:3.30px;top:191.70px;font-size:10.4px;color:#fff;font-weight:normal;">"${workspace_loc:/${ProjName}/framework/Keyboard/Interface}"</div>
<div class="t" style="left:3.30px;top:204.70px;font-size:10.4px;color:#fff;font-weight:normal;">"${workspace_loc:/${ProjName}/framework/GPIO}"</div>
</div>
<div class="r" style="left:809px;top:187px;width:16px;height:217px;background:#f0f0f0;"></div>
<div class="r" style="left:810px;top:202px;width:13px;height:61px;background:#cdcdcd;"></div>
<svg style="left:812px;top:193.5px" width="9" height="5"><path d="M0.8 4.5 L4.5 0.8 L8.2 4.5" fill="none" stroke="#606060" stroke-width="1.4"/></svg>
<svg style="left:812px;top:394px" width="9" height="5"><path d="M0.8 0.5 L4.5 4.2 L8.2 0.5" fill="none" stroke="#606060" stroke-width="1.4"/></svg>
<div class="r" style="left:367px;top:410px;width:459px;height:25px;background:#fff;border:1px solid #c9cbd0;"></div>
<div class="r" style="left:367px;top:434px;width:459px;height:1px;background:#9ea1a8;"></div>
<div class="t" style="left:373.60px;top:410.70px;font-size:10.4px;color:#000;font-weight:normal;letter-spacing:0.052px;">Include files (-include)</div>
<svg style="left:727px;top:414px" width="14" height="14"><path d="M3.5 0.5 H9 L12.5 4 V12.5 H3.5 Z" fill="#fbfcfe" stroke="#c09050" stroke-width="1"/><path d="M9 0.5 V4 H12.5" fill="#f0e0c0" stroke="#c09050" stroke-width="0.8"/><path d="M5 4.5 H11 M5 6.5 H11 M5 8.5 H11 M5 10.5 H11" stroke="#8fb0d8" stroke-width="0.9" stroke-dasharray="2.5 0.8"/><path d="M0.3 7.6 H7.2 M3.75 4.2 V11" stroke="#2f9a3a" stroke-width="2.4"/><path d="M2.5 11.5 H5" stroke="#2a3a30" stroke-width="1"/></svg><svg style="left:747px;top:414px" width="14" height="14"><path d="M3.5 0.5 H9 L12.5 4 V12.5 H3.5 Z" fill="#fbfcfe" stroke="#a6a6a6" stroke-width="1"/><path d="M9 0.5 V4 H12.5" fill="none" stroke="#a6a6a6" stroke-width="0.8"/><path d="M5 4.5 H11 M5 6.5 H11 M5 8.5 H11 M5 10.5 H11" stroke="#b8b8b8" stroke-width="0.9" stroke-dasharray="2.5 0.8"/><path d="M0.8 4.8 L6.6 10.6 M6.6 4.8 L0.8 10.6" stroke="#a8a8a8" stroke-width="2.1"/></svg><svg style="left:767px;top:414px" width="14" height="14"><path d="M2.5 0.5 H8.5 L12 4 V12.5 H2.5 Z" fill="#f8f8f8" stroke="#a8a8a8" stroke-width="1"/><path d="M8.5 0.5 V4 H12" fill="none" stroke="#a8a8a8" stroke-width="0.8"/><path d="M4 3.5 H9 M5 5.5 H10 M5 7.5 H10 M5 9.5 H10" stroke="#b4b4b4" stroke-width="0.9"/><path d="M0.5 5 L5 9.5" stroke="#9c9c9c" stroke-width="1.4"/><rect x="4.5" y="9.5" width="3" height="2" fill="#9c9c9c"/></svg><svg style="left:787px;top:414px" width="14" height="14"><path d="M5 0.5 L9.5 5.5 H7 V12.5 H3 V5.5 H0.5 Z" fill="#f6f6f6" stroke="#a8a8a8" stroke-width="1"/><path d="M12.2 1 V10" stroke="#bcbcbc" stroke-width="1.6"/><path d="M1 0.5 H4" stroke="#c4c4c4"/></svg><svg style="left:807px;top:414px" width="14" height="14"><path d="M5 12.5 L9.5 7.5 H7 V0.5 H3 V7.5 H0.5 Z" fill="#f6f6f6" stroke="#a8a8a8" stroke-width="1"/><path d="M12.2 3 V13" stroke="#bcbcbc" stroke-width="1.6"/><path d="M2 13.5 H8" stroke="#b4b4b4"/></svg><div class="r" style="left:367px;top:435px;width:459px;height:219px;background:#fff;border:1px solid #c9cbd0;border-top-color:#9ea1a8;border-bottom-color:#8c8f99;border-right-color:#b5b8be;"></div>
<div class="r" style="left:676px;top:671px;width:82px;height:20px;background:#e1e1e1;border:1px solid #adadad;"></div>
<div class="t" style="left:679.40px;top:671.70px;font-size:10.4px;color:#000;font-weight:normal;letter-spacing:-0.220px;">Restore <u>D</u>efaults</div>
<div class="r" style="left:764px;top:671px;width:78px;height:20px;background:#e1e1e1;border:1px solid #adadad;"></div>
<div class="t" style="left:789.30px;top:671.70px;font-size:10.4px;color:#000;font-weight:normal;letter-spacing:0.150px;"><u>A</u>pply</div>
<div class="r" style="left:674px;top:710px;width:78px;height:20px;background:#e1e1e1;border:2px solid #0078d7;"></div>
<div class="t" style="left:705.80px;top:710.70px;font-size:10.4px;color:#000;font-weight:normal;">OK</div>
<div class="r" style="left:759px;top:710px;width:78px;height:20px;background:#e1e1e1;border:1px solid #adadad;"></div>
<div class="t" style="left:782.60px;top:710.70px;font-size:10.4px;color:#000;font-weight:normal;letter-spacing:-0.320px;">Cancel</div>
<svg style="left:14px;top:710px" width="18" height="18"><circle cx="9" cy="9" r="8.3" fill="#f2f2f2" stroke="#8a8f98" stroke-width="1.2"/><path d="M6.2 6.9 Q6.2 3.9 9 3.9 Q11.8 3.9 11.8 6.5 Q11.8 8.1 10.1 9 Q9 9.6 9 11.2" fill="none" stroke="#3c4a5c" stroke-width="1.9"/><circle cx="9" cy="13.6" r="1.15" fill="#3c4a5c"/></svg></body></html>
